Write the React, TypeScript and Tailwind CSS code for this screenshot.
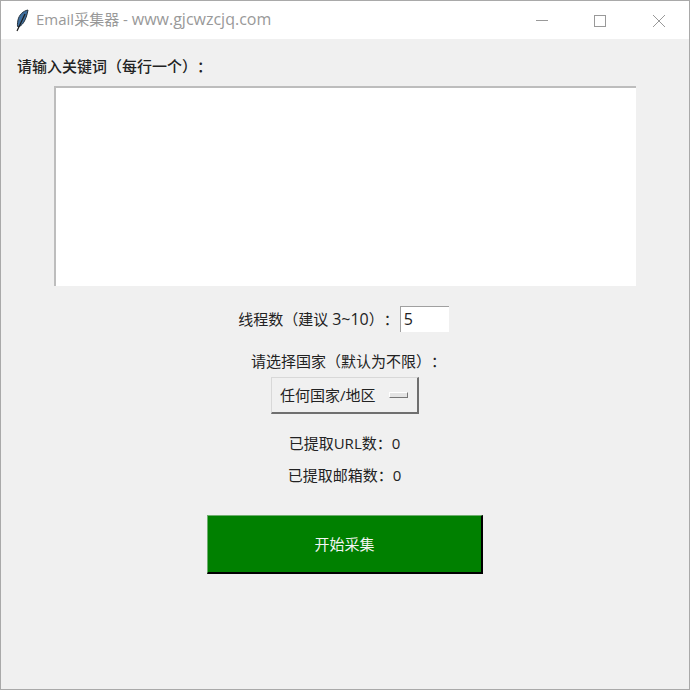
export default function App() {
  const font = { fontFamily: '"Open Sans", "Noto Sans CJK SC", sans-serif' };
  return (
    <div style={font} className="w-[690px] h-[690px] flex flex-col bg-[#f0f0f0] border border-[#a9a9a9] text-[15px] text-[#222] overflow-hidden [text-spacing-trim:space-all]">
      <div className="h-[38px] shrink-0 bg-white flex items-center">
        <svg width="16" height="24" viewBox="0 0 16 24" className="ml-[13px]">
          <path d="M14 2 C9 3 5 7 4 12 C3.5 15 3 18 4 19 C8 18 12 13 14 2 Z" fill="#3f6f9f" stroke="#22303c" strokeWidth="1" />
          <path d="M11 6 L3 23" stroke="#1a1a1a" strokeWidth="1.2" fill="none" />
        </svg>
        <span className="ml-[6px] text-[#999] leading-[36px] h-[38px]">Email采集器 - <span className="text-[16px]">www.gjcwzcjq.com</span></span>
        <div className="ml-auto flex items-center h-full">
          <svg width="58" height="38" viewBox="0 0 58 38"><path d="M7 19.5H19" stroke="#999" /></svg>
          <svg width="59" height="38" viewBox="0 0 59 38"><rect x="7.5" y="14.5" width="11" height="11" fill="none" stroke="#999" /></svg>
          <svg width="43" height="38" viewBox="0 0 43 38"><path d="M7 14L19 26M19 14L7 26" stroke="#999" /></svg>
        </div>
      </div>
      <div className="flex flex-col items-center">
        <div className="self-start ml-[16px] mt-[16px] leading-[22px] font-medium">请输入关键词（每行一个）：</div>
        <div className="w-[582px] h-[200px] mt-[9px] bg-white border-t-2 border-l-2 border-[#bdbdbd]" />
        <div className="flex items-center mt-[20px] h-[26px] mr-[3px]">
          <span>线程数（建议 <span className="text-[16px]">3~10</span>）：</span>
          <div className="w-[49px] h-[26px] ml-[1px] bg-white border-t border-l border-[#a0a0a0] pl-[3px] leading-[25px] text-[16px]">5</div>
        </div>
        <div className="mt-[19px] leading-[20px] ml-[7px]">请选择国家（默认为不限）：</div>
        <div className="mt-[6px] w-[148px] h-[37px] flex items-center bg-[#f0f0f0] border border-[#d8d8d8] border-r-2 border-b-2 border-r-[#6f6f6f] border-b-[#6f6f6f] pl-[8px]">
          <span>任何国家/地区</span>
          <span className="ml-auto mr-[9px] w-[19px] h-[6px] bg-[#e4e4e4] border border-[#fff] border-r-[#777] border-b-[#777]" />
        </div>
        <div className="mt-[19px] leading-[20px] mr-[1px]">已提取URL数：0</div>
        <div className="mt-[12px] leading-[20px] mr-[1px]">已提取邮箱数：0</div>
        <div className="mt-[30px] w-[276px] h-[59px] flex items-center justify-center bg-[#008000] text-[#f4f4f4] border border-[#6fae6f] border-r-2 border-b-2 border-r-black border-b-black">
          开始采集
        </div>
      </div>
    </div>
  );
}
